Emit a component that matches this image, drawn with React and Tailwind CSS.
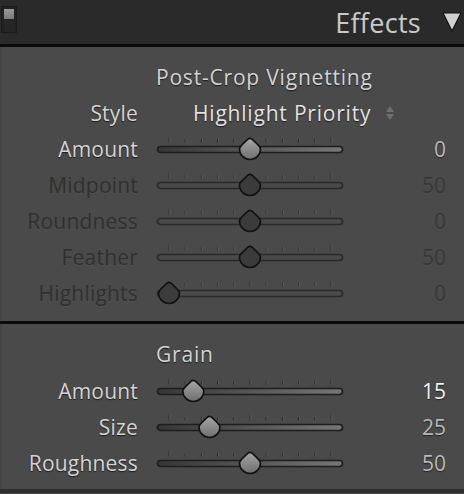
import React from 'react'

const font = { fontFamily: '"Open Sans", "Noto Sans", sans-serif' }

const txt = 'text-[21px] leading-none tracking-[0.8px]'
const lbl = 'text-[21px] leading-none tracking-[0.2px]'
const labelOn = 'text-[#d4d4d4] [text-shadow:0_1px_1px_#1c1c1c]'
const labelOff = 'text-[#303030] [text-shadow:0_1px_0_rgba(255,255,255,0.05)]'

// thumb travels 17..179 inside the svg, ticks every 16.2px
function Slider({ pos, active, id }) {
  const cx = 17 + pos * 162
  const ticks = Array.from({ length: 11 }, (_, i) => 17 + i * 16.2)
  return (
    <svg width="195" height="36" viewBox="0 0 195 36" className="ml-[14px] shrink-0">
      <defs>
        <linearGradient id={`tr-${id}`} x1="0" x2="1" y1="0" y2="0">
          <stop offset="0" stopColor="#363636" />
          <stop offset="1" stopColor="#767676" />
        </linearGradient>
        <linearGradient id={`th-${id}`} x1="0" x2="0" y1="0" y2="1">
          <stop offset="0" stopColor="#a6a6a6" />
          <stop offset="1" stopColor="#6e6e6e" />
        </linearGradient>
      </defs>
      {ticks.map((x, i) => {
        const tall = i === 0 || i === 5 || i === 10
        return (
          <g key={i}>
            <line x1={x} x2={x} y1={tall ? 6 : 8} y2="11.5" stroke={active ? '#2a2a2a' : '#333'} strokeWidth="1" />
            <line x1={x + 1} x2={x + 1} y1={tall ? 6 : 8} y2="11.5" stroke="#5a5a5a" strokeWidth="1" />
          </g>
        )
      })}
      <rect
        x="5.5" y="15.5" width="185" height="6" rx="3"
        fill={active ? `url(#tr-${id})` : '#4a4a4a'}
        stroke={active ? '#1e1e1e' : '#2a2a2a'}
        strokeWidth="1.7"
      />
      <path
        d={`M ${cx - 10.5} 18 A 10.5 10.5 0 0 0 ${cx + 10.5} 18 C ${cx + 10.5} 15 ${cx + 5} 11 ${cx + 2} 8.2 Q ${cx} 6.5 ${cx - 2} 8.2 C ${cx - 5} 11 ${cx - 10.5} 15 ${cx - 10.5} 18 Z`}
        fill={active ? `url(#th-${id})` : '#3b3b3b'}
        stroke="#111"
        strokeWidth="1.6"
      />
    </svg>
  )
}

function SliderRow({ label, value, pos, active, valueClass }) {
  return (
    <div className="flex h-[36px] items-center">
      <div className={`w-[136px] text-right ${lbl} ${active ? labelOn : labelOff}`}>{label}</div>
      <Slider pos={pos} active={active} id={label + value} />
      <div className={`w-[99px] text-right text-[21px] leading-none ${valueClass}`}>{value}</div>
    </div>
  )
}

export default function App() {
  const offVal = 'text-[#383838] [text-shadow:0_1px_0_rgba(255,255,255,0.05)]'
  const onVal = 'text-[#b9b9b9] [text-shadow:0_1px_1px_#222]'
  return (
    <div className="h-[494px] w-[464px] overflow-hidden bg-[#4a4a4a]" style={font}>
      <div className="relative flex h-[44px] items-center justify-end bg-[#2a2a2a] pr-[2px]">
        <div className="absolute left-[1px] top-[6px] flex h-[27px] w-[16px] flex-col border border-[#1a1a1a] bg-[#222]">
          <div className="m-[2px] mb-0 h-[10px] bg-gradient-to-b from-[#9a9a9a] to-[#7a7a7a]" />
          <div className="mx-[2px] mt-[1px] flex-1 bg-[#262626]" />
        </div>
        <span className="mr-[21px] text-[27px] leading-none tracking-[0.3px] text-[#c9c9c9]">Effects</span>
        <svg width="20" height="22" viewBox="0 0 20 22">
          <path d="M1 2 L19 2 L10 20 Z" fill="#cfcfcf" stroke="#111" strokeWidth="1.2" strokeLinejoin="round" />
        </svg>
      </div>
      <div className="h-[3px] bg-[#0c0c0c]" />

      <div className="border-l-2 border-[#444] pb-[10px] pt-[12px]">
        <div className="flex h-[36px] items-center pl-[154px]">
          <span className={`${txt} ${labelOn} text-[#cdcdcd]`}>Post-Crop Vignetting</span>
        </div>
        <div className="flex h-[36px] items-center">
          <div className={`w-[136px] text-right ${lbl} ${labelOn}`}>Style</div>
          <span className={`ml-[55px] ${txt} text-[#e2e2e2] [text-shadow:0_1px_1px_#1c1c1c]`}>Highlight Priority</span>
          <svg width="10" height="16" viewBox="0 0 10 16" className="ml-[14px]">
            <path d="M1 7 L9 7 L5 1 Z" fill="#707070" />
            <path d="M1 9 L9 9 L5 15 Z" fill="#707070" />
          </svg>
        </div>
        <SliderRow label="Amount" value="0" pos={0.5} active valueClass={onVal} />
        <SliderRow label="Midpoint" value="50" pos={0.5} valueClass={offVal} />
        <SliderRow label="Roundness" value="0" pos={0.5} valueClass={offVal} />
        <SliderRow label="Feather" value="50" pos={0.5} valueClass={offVal} />
        <SliderRow label="Highlights" value="0" pos={0} valueClass={offVal} />
      </div>

      <div className="h-[3px] bg-[#0c0c0c]" />

      <div className="h-[165px] border-l-2 border-[#444] pt-[11px]">
        <div className="flex h-[38px] items-center pl-[154px]">
          <span className={`${txt} ${labelOn} text-[#cdcdcd]`}>Grain</span>
        </div>
        <SliderRow label="Amount" value="15" pos={0.15} active valueClass="text-[#f2f2f2] [text-shadow:0_1px_1px_#222]" />
        <SliderRow label="Size" value="25" pos={0.25} active valueClass={onVal} />
        <SliderRow label="Roughness" value="50" pos={0.5} active valueClass={onVal} />
      </div>
      <div className="h-[4px] bg-[#2e2e2e]" />
    </div>
  )
}
